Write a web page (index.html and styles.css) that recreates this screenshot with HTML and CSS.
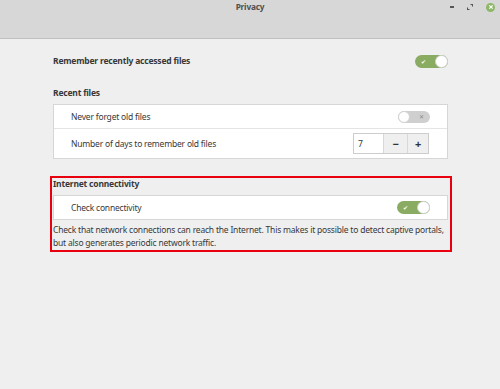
FILE: index.html
```html
<!DOCTYPE html>
<html>
<head>
<meta charset="utf-8">
<link rel="stylesheet" href="styles.css">
</head>
<body>
<div class="window">
  <header class="titlebar">
    <div class="title">Privacy</div>
    <div class="controls">
      <span class="ctl min"></span>
      <svg class="ctl max" width="6" height="6" viewBox="0 0 6 6"><path d="M3.5 0.5h2v2M2.5 5.5h-2v-2" fill="none" stroke="#555" stroke-width="1.1"/></svg>
      <span class="close"><svg width="8" height="8" viewBox="0 0 8 8"><path d="M2.3 2.3l3.4 3.4M5.7 2.3l-3.4 3.4" stroke="#fff" stroke-width="1.2"/></svg></span>
    </div>
  </header>
  <main class="content">
    <section class="top-row">
      <span class="bold">Remember recently accessed files</span>
      <span class="switch on"><span class="mark">✔</span><span class="knob"></span></span>
    </section>

    <section class="group">
      <h2 class="heading">Recent files</h2>
      <div class="box">
        <div class="row r1">
          <span>Never forget old files</span>
          <span class="switch off"><span class="knob"></span><span class="mark">✕</span></span>
        </div>
        <div class="row r2">
          <span>Number of days to remember old files</span>
          <div class="spin">
            <span class="entry">7</span>
            <span class="btn">−</span>
            <span class="btn">+</span>
          </div>
        </div>
      </div>
    </section>

    <section class="group highlight">
      <h2 class="heading">Internet connectivity</h2>
      <div class="box">
        <div class="row r3">
          <span>Check connectivity</span>
          <span class="switch on"><span class="mark">✔</span><span class="knob"></span></span>
        </div>
      </div>
      <p class="desc">Check that network connections can reach the Internet. This makes it possible to detect captive portals, but also generates periodic network traffic.</p>
    </section>
  </main>
</div>
</body>
</html>
```
FILE: styles.css
```css
* { box-sizing: border-box; }
html, body { margin: 0; padding: 0; }
body {
  width: 500px;
  height: 389px;
  background: #efefef;
  font-family: "Noto Sans", "DejaVu Sans", sans-serif;
  font-size: 8.5px;
  letter-spacing: -0.2px;
  line-height: 12px;
  color: #383838;
  overflow: hidden;
}
.titlebar {
  position: relative;
  height: 39px;
  background: #d7d7d7;
  border-bottom: 1px solid #bfbfbf;
}
.title {
  text-align: center;
  padding-top: 1px;
  font-weight: bold;
  font-size: 8.3px;
  color: #505050;
  line-height: 12px;
}
.controls {
  position: absolute;
  top: 2px;
  right: 5px;
  display: flex;
  align-items: center;
  gap: 13px;
  height: 10px;
}
.ctl.min {
  display: block;
  width: 4px;
  height: 2px;
  background: #555;
}
.ctl.max { display: block; }
.close {
  width: 9px;
  height: 9px;
  border-radius: 50%;
  background: #8fb76a;
  display: flex;
  align-items: center;
  justify-content: center;
}
.close svg { display: block; }
.content {
  padding: 15px 52px 0 53px;
}
.top-row {
  display: flex;
  align-items: center;
  justify-content: space-between;
  height: 14px;
}
.bold, .heading {
  font-weight: bold;
  font-size: 8.5px;
  color: #383838;
}
.heading {
  margin: 0;
  line-height: 14px;
}
.group { margin-top: 18px; }
.group .heading { margin-bottom: 4px; }
.box {
  background: #ffffff;
  border: 1px solid #d6d6d6;
}
.row {
  display: flex;
  align-items: center;
  justify-content: space-between;
  padding: 0 17px 0 17px;
}
.r1 { height: 24px; border-bottom: 1px solid #e4e4e4; }
.r2 { height: 29px; }
.r3 { height: 23px; }
.switch {
  position: relative;
  display: flex;
  align-items: center;
  width: 33px;
  height: 13px;
  border-radius: 7px;
  letter-spacing: 0;
}
.switch.on {
  background: #8aab62;
  justify-content: flex-end;
}
.switch.off {
  background: #cfcfcf;
  justify-content: flex-start;
  width: 32px;
  height: 12px;
}
.switch .knob {
  width: 13px;
  height: 13px;
  border-radius: 50%;
  background: #fff;
  border: 1px solid #d2d2d2;
}
.switch.off .knob { width: 12px; height: 12px; }
.switch .mark {
  position: absolute;
  font-size: 6px;
  line-height: 6px;
  color: #fff;
}
.switch.on .mark { left: 6px; top: 4px; }
.switch.off .mark { right: 6px; top: 3px; color: #8a8a8a; }
.spin {
  display: flex;
  height: 21px;
  border: 1px solid #cdcdcd;
  margin-right: 1px;
}
.spin .entry {
  width: 29px;
  background: #fff;
  padding-left: 4px;
  line-height: 19px;
  font-size: 8.5px;
}
.spin .btn {
  display: flex;
  align-items: center;
  justify-content: center;
  background: #efefef;
  border-left: 1px solid #d8d8d8;
  font-weight: bold;
  font-size: 11px;
  color: #333;
}
.spin .btn:nth-child(2) { width: 24px; }
.spin .btn:nth-child(3) { width: 21px; }
.highlight {
  position: relative;
  margin-top: 18px;
}
.highlight::before {
  content: "";
  position: absolute;
  left: -3px;
  right: -4px;
  top: -1px;
  bottom: -3px;
  border: 2px solid #e8000e;
  pointer-events: none;
}
.desc {
  margin: 3px 0 0 0;
  line-height: 13px;
}
```
